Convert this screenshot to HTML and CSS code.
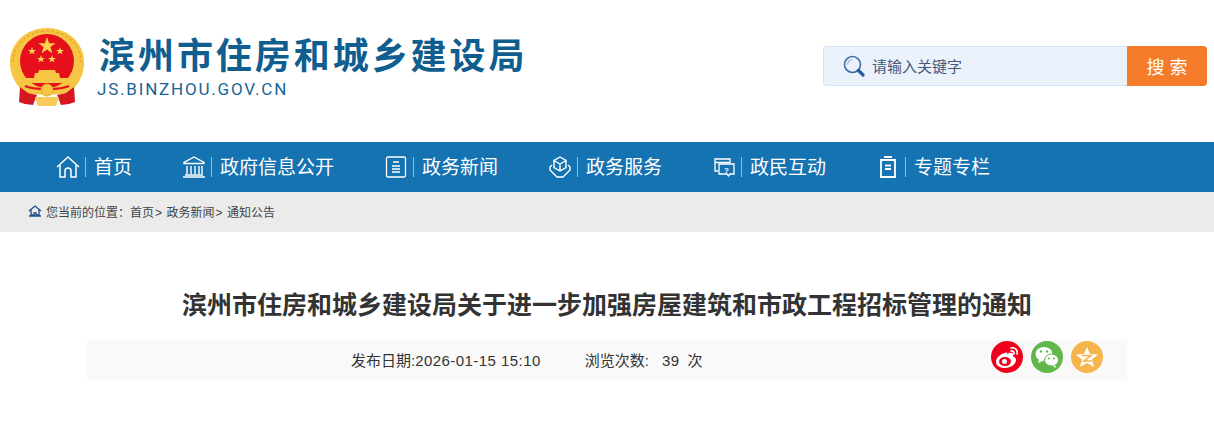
FILE: index.html
```html
<!DOCTYPE html>
<html lang="zh-CN">
<head>
    <meta charset="UTF-8">
    <title>滨州市住房和城乡建设局</title>
    <link rel="stylesheet" href="styles.css">
</head>
<body>
    <header class="top">
        <div class="logo">
            <svg class="emblem" viewBox="0 0 74 80" width="74" height="80">
                <path d="M37 1C16 1 0 16 0 35c0 11 4 20 11 27l52 0c7-7 11-16 11-27C74 16 58 1 37 1z" fill="#f6c544"/>
                <path d="M3 35C3 18 18 4 37 4s34 14 34 31" fill="none" stroke="#e5a82e" stroke-width="1.500" stroke-dasharray="3 2"/>
                <circle cx="37" cy="34" r="27" fill="#e60f1c"/>
                <polygon points="37,10 39.100,16.200 45.600,16.200 40.400,20.100 42.300,26.300 37,22.500 31.700,26.300 33.600,20.100 28.400,16.200 34.900,16.200" fill="#f9d44c"/>
                <polygon points="22,20 23,22.900 26,22.900 23.600,24.700 24.500,27.600 22,25.800 19.500,27.600 20.400,24.700 18,22.900 21,22.900" fill="#f9d44c"/>
                <polygon points="50,20 51,22.900 54,22.900 51.600,24.700 52.500,27.600 50,25.800 47.500,27.600 48.400,24.700 46,22.900 49,22.900" fill="#f9d44c"/>
                <polygon points="31,28 32,30.900 35,30.900 32.600,32.700 33.500,35.600 31,33.800 28.500,35.600 29.400,32.700 27,30.900 30,30.900" fill="#f9d44c"/>
                <polygon points="42,28 43,30.900 46,30.900 43.600,32.700 44.500,35.600 42,33.800 39.500,35.600 40.400,32.700 38,30.900 41,30.900" fill="#f9d44c"/>
                <path d="M29 43h16l1 3h3l1 5H24l1-5h3z" fill="#f6c544"/>
                <path d="M15 51h44v5H15z" fill="#f6c544"/>
                <path d="M10 56c8 6 46 6 54 0l-1 8c-10 5-42 5-52 0z" fill="#f6c544"/>
                <path d="M15 59c8 4 36 4 44 0" fill="none" stroke="#e60f1c" stroke-width="2"/>
                <path d="M10 60l-1 15 6 2 8 1 4-10-9-2z" fill="#d7171f"/>
                <path d="M64 60l1 15-6 2-8 1-4-10 9-2z" fill="#d7171f"/>
                <circle cx="37" cy="63" r="6" fill="#f6c544" stroke="#e5a82e"/>
                <path d="M25 70h24l-3 9H28z" fill="#f6cb5a"/>
            </svg>
            <div class="logo-text">
                <div class="site-name">滨州市住房和城乡建设局</div>
                <div class="site-url">JS.BINZHOU.GOV.CN</div>
            </div>
        </div>
        <form class="search">
            <div class="search-box">
                <svg viewBox="0 0 22 22" width="22" height="22">
                    <circle cx="9.500" cy="9.500" r="8" fill="none" stroke="#3c6ea8" stroke-width="1.600"/>
                    <path d="M4.500 9.500a5 5 0 0 1 5-5" fill="none" stroke="#9db8d8" stroke-width="1.200"/>
                    <path d="M15.500 15.500l4.500 4.500" stroke="#2a5a9a" stroke-width="3.200" stroke-linecap="round"/>
                </svg>
                <span class="placeholder">请输入关键字</span>
            </div>
            <button type="button" class="search-btn">搜 索</button>
        </form>
    </header>

    <nav class="nav">
        <a class="nav-item">
            <svg viewBox="0 0 24 22" width="24" height="22" fill="none" stroke="#fff" stroke-width="1.500">
                <path d="M1 11L12 1l11 10M4 9v12h5v-6a3 3 0 0 1 6 0v6h5V9"/>
            </svg>
            <span class="nav-text">首页</span>
        </a>
        <a class="nav-item">
            <svg viewBox="0 0 24 22" width="24" height="22" fill="none" stroke="#fff" stroke-width="1.400">
                <path d="M12 1L2 6.500v1h20v-1zM5 10v8M9 10v8M13 10v8M17 10v8M20 10v8M3 19h18M1 21h22"/>
            </svg>
            <span class="nav-text">政府信息公开</span>
        </a>
        <a class="nav-item">
            <svg viewBox="0 0 24 22" width="24" height="22" fill="none" stroke="#fff" stroke-width="1.300">
                <rect x="2.500" y="1" width="19" height="20" rx="1.500"/>
                <path d="M9 6h6M8 10h8M8 13h8M8 16h8"/>
            </svg>
            <span class="nav-text">政务新闻</span>
        </a>
        <a class="nav-item">
            <svg viewBox="0 0 24 22" width="24" height="22" fill="none" stroke="#fff" stroke-width="1.400">
                <path d="M12 1l6 3.500v7L12 15l-6-3.500v-7zM6 4.500l6 3.500 6-3.500M12 8v7"/>
                <path d="M4 9l-2 2v3l7 7h6l7-7v-3l-2-2"/>
            </svg>
            <span class="nav-text">政务服务</span>
        </a>
        <a class="nav-item">
            <svg viewBox="0 0 24 22" width="24" height="22" fill="none" stroke="#fff" stroke-width="1.300">
                <path d="M6 15H3V3h15v4M3 6.500h15"/>
                <path d="M7 8h15v10h-4l-1.500 2-1.500-2H7z"/>
                <text x="14.500" y="16.500" font-size="8" font-family="Liberation Sans" font-weight="bold" text-anchor="middle" fill="#fff" stroke="none">?</text>
            </svg>
            <span class="nav-text">政民互动</span>
        </a>
        <a class="nav-item">
            <svg viewBox="0 0 24 22" width="24" height="22" fill="none" stroke="#fff" stroke-width="1.800">
                <path d="M8 1h8M5 4h14v17H5zM9 9.500h6M9 13h6"/>
            </svg>
            <span class="nav-text">专题专栏</span>
        </a>
    </nav>

    <div class="crumb">
        <svg viewBox="0 0 14 12" width="14" height="12" fill="none" stroke="#1d4f86" stroke-width="1.300">
            <path d="M1 6l6-5 6 5M3 5v5h3V8h2v2h3V5M1 11h12"/>
        </svg>
        <span>您当前的位置：首页<i class="crumb-arrow">&gt;</i>政务新闻<i class="crumb-arrow">&gt;</i>通知公告</span>
    </div>

    <main class="article">
        <h1 class="title">滨州市住房和城乡建设局关于进一步加强房屋建筑和市政工程招标管理的通知</h1>
        <div class="meta">
            <div class="meta-info">
                <span>发布日期:<b class="num">2026-01-15 15:10</b></span>
                <span>浏览次数:<b class="num count">39</b>次</span>
            </div>
            <div class="share">
                <a class="share-btn weibo">
                    <svg viewBox="0 0 32 32" width="32" height="32">
                        <path d="M14 12c-5 1-9 5-9 9 0 4 5 6 9 6 6 0 11-4 11-8 0-3-3-3-3-4 1-3-1-4-4-3l-2 1c0-2-1-2-2-1z" fill="#fff"/>
                        <ellipse cx="14" cy="20.500" rx="6" ry="4.500" fill="#f0001c"/>
                        <circle cx="13.500" cy="20.500" r="2.500" fill="#fff"/>
                        <path d="M20 7c4-1 7 2 6 6M20 10c2-.5 3.500 1 3 3" fill="none" stroke="#fff" stroke-width="1.600" stroke-linecap="round"/>
                    </svg>
                </a>
                <a class="share-btn wechat">
                    <svg viewBox="0 0 32 32" width="32" height="32">
                        <ellipse cx="13" cy="13" rx="8.500" ry="7" fill="#fff"/>
                        <path d="M8 18l-1 4 5-2z" fill="#fff"/>
                        <ellipse cx="20.500" cy="19" rx="7" ry="6" fill="#fff" stroke="#62b74a"/>
                        <path d="M24 24l1.500 3-4-2z" fill="#fff"/>
                        <circle cx="10" cy="10.500" r="1.200" fill="#62b74a"/>
                        <circle cx="16" cy="10.500" r="1.200" fill="#62b74a"/>
                        <circle cx="18" cy="17.500" r="1" fill="#62b74a"/>
                        <circle cx="23" cy="17.500" r="1" fill="#62b74a"/>
                    </svg>
                </a>
                <a class="share-btn qzone">
                    <svg viewBox="0 0 32 32" width="32" height="32">
                        <path d="M16 6l3 7 8 .5-6 5 2 7.500-7-4-7 4 2-7.500-6-5 8-.5z" fill="#fff"/>
                        <path d="M11 14.500h9l-7 5.500h8" fill="none" stroke="#f5b54a" stroke-width="1.600"/>
                    </svg>
                </a>
            </div>
        </div>
    </main>
</body>
</html>
```

FILE: styles.css
```css
* {
    box-sizing: border-box;
}

body {
    margin: 0;
    font-family: "Liberation Sans", "Noto Sans CJK SC", sans-serif;
    color: #333;
    background: #fff;
}

.top {
    height: 142px;
    padding: 27px 7px 0 10px;
    display: flex;
    justify-content: space-between;
    align-items: flex-start;
}

.logo {
    display: flex;
    gap: 15px;
}

.logo-text {
    padding-top: 7px;
}

.site-name {
    font-size: 36px;
    line-height: 46px;
    font-weight: bold;
    letter-spacing: 2.950px;
    color: #0f5e8f;
}

.site-url {
    margin-left: -2px;
    font-family: Roboto, sans-serif;
    font-size: 17px;
    line-height: 18px;
    letter-spacing: 1.800px;
    color: #1a6496;
}

.search {
    display: flex;
    width: 384px;
    height: 40px;
    margin-top: 19px;
}

.search-box {
    flex: 1;
    display: flex;
    align-items: center;
    gap: 7px;
    padding-left: 19px;
    background: #ebf2fb;
    border: 1px solid #d2e2f7;
    border-right: none;
    border-radius: 4px 0 0 4px;
}

.placeholder {
    margin-bottom: 2px;
    font-size: 15px;
    color: #44597c;
}

.search-btn {
    width: 80px;
    border: none;
    border-radius: 0 4px 4px 0;
    background: #f57c2a;
    color: #fff;
    font-family: inherit;
    font-size: 18px;
}

.nav {
    height: 50px;
    padding-left: 56px;
    display: flex;
    align-items: center;
    gap: 50px;
    background: #1673b1;
}

.nav-item {
    display: flex;
    align-items: center;
    color: #fff;
    font-size: 19px;
}

.nav-text {
    margin-left: 5px;
    padding: 1px 0 0 9px;
    line-height: 20px;
    background: linear-gradient(#8fbcd9, #8fbcd9) left center / 1px 20px no-repeat;
}

.crumb {
    height: 40px;
    padding: 0 0 2px 28px;
    display: flex;
    align-items: center;
    gap: 4px;
    background: #ebebeb;
    font-size: 12px;
    color: #444;
}

.crumb-arrow {
    margin: 0 4.500px 0 1px;
    font-style: normal;
}

.article {
    width: 1040px;
    margin: 0 auto;
    padding-top: 56px;
}

.title {
    margin: 0;
    font-size: 25px;
    line-height: 34px;
    font-weight: bold;
    text-align: center;
    color: #333;
}

.meta {
    height: 40px;
    margin-top: 18px;
    padding-right: 24px;
    display: flex;
    align-items: flex-start;
    background: #f9f9f9;
}

.meta-info {
    flex: 1;
    padding: 9px 0 0 264px;
    display: flex;
    gap: 44px;
    font-size: 15px;
}

.num {
    font-weight: normal;
    letter-spacing: .450px;
}

.count {
    margin: 0 8px 0 13px;
}

.share {
    display: flex;
    gap: 8px;
    padding-top: 1px;
}

.share-btn {
    width: 32px;
    height: 32px;
    border-radius: 50%;
}

.weibo {
    background: #f0001c;
}

.wechat {
    background: #62b74a;
}

.qzone {
    background: #f5b54a;
}
```
